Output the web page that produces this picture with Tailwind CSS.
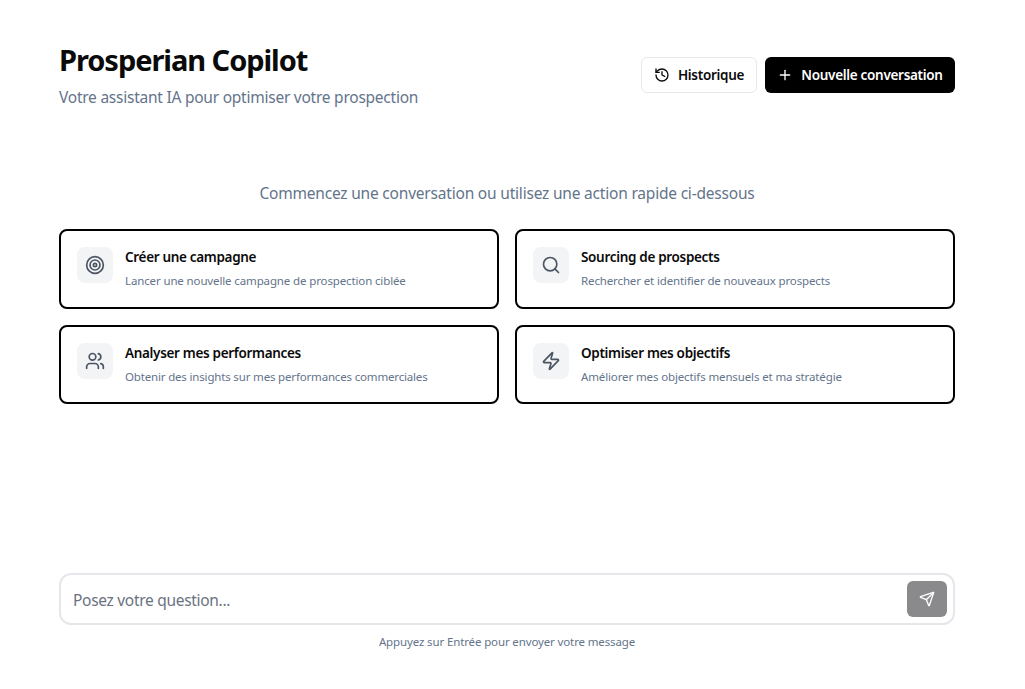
<!DOCTYPE html>
<html lang="fr">
  <head>
    <meta charset="UTF-8" />
    <meta name="viewport" content="width=device-width, initial-scale=1" />
    <title>Prosperian Copilot</title>
    <script src="https://cdn.jsdelivr.net/npm/@tailwindcss/browser@4"></script>
  </head>
  <body class="bg-white h-[689px] overflow-hidden font-['Noto_Sans',sans-serif] text-[#0a0a0a]">
    <div class="h-full w-[896px] ml-[59px] flex flex-col">
      <header class="flex items-center justify-between pt-[41px]">
        <div>
          <h1 class="text-[29px] leading-[38px] font-bold tracking-[-1.05px]">Prosperian Copilot</h1>
          <p class="mt-[6px] text-[15.5px] leading-[24px] text-[#64748b] tracking-[-0.24px]">Votre assistant IA pour optimiser votre prospection</p>
        </div>
        <div class="flex items-center gap-2">
          <button class="h-9 w-[116px] justify-center flex items-center gap-2 rounded-md border border-[#e5e7eb] bg-white text-[13.5px] font-semibold tracking-[-0.3px]">
            <svg class="w-4 h-4" viewBox="0 0 24 24" fill="none" stroke="currentColor" stroke-width="2" stroke-linecap="round" stroke-linejoin="round"><path d="M3 12a9 9 0 1 0 9-9 9.75 9.75 0 0 0-6.74 2.74L3 8"/><path d="M3 3v5h5"/><path d="M12 7v5l4 2"/></svg>
            Historique
          </button>
          <button class="h-9 w-[190px] justify-center flex items-center gap-2 rounded-md bg-black text-white text-[13.5px] font-semibold tracking-[-0.3px]">
            <svg class="w-4 h-4" viewBox="0 0 24 24" fill="none" stroke="currentColor" stroke-width="2" stroke-linecap="round" stroke-linejoin="round"><path d="M5 12h14"/><path d="M12 5v14"/></svg>
            Nouvelle conversation
          </button>
        </div>
      </header>

      <p class="mt-[72px] text-center text-[15.5px] leading-[24px] text-[#64748b] tracking-[-0.2px]">Commencez une conversation ou utilisez une action rapide ci-dessous</p>

      <div class="mt-[24px] grid grid-cols-2 gap-x-4 gap-y-4">
        <div class="h-[80px] rounded-lg border-2 border-black p-4 flex items-start gap-3">
          <div class="w-9 h-9 rounded-lg bg-[#f3f4f6] flex items-center justify-center text-[#4b5563]">
            <svg class="w-5 h-5" viewBox="0 0 24 24" fill="none" stroke="currentColor" stroke-width="2" stroke-linecap="round" stroke-linejoin="round"><circle cx="12" cy="12" r="10"/><circle cx="12" cy="12" r="6"/><circle cx="12" cy="12" r="2"/></svg>
          </div>
          <div>
            <h3 class="text-[13.5px] leading-5 font-semibold tracking-[-0.32px]">Créer une campagne</h3>
            <p class="mt-[6px] text-[11.5px] leading-4 text-[#64748b] tracking-[-0.13px]">Lancer une nouvelle campagne de prospection ciblée</p>
          </div>
        </div>
        <div class="h-[80px] rounded-lg border-2 border-black p-4 flex items-start gap-3">
          <div class="w-9 h-9 rounded-lg bg-[#f3f4f6] flex items-center justify-center text-[#4b5563]">
            <svg class="w-5 h-5" viewBox="0 0 24 24" fill="none" stroke="currentColor" stroke-width="2" stroke-linecap="round" stroke-linejoin="round"><circle cx="11" cy="11" r="8"/><path d="m21 21-4.3-4.3"/></svg>
          </div>
          <div>
            <h3 class="text-[13.5px] leading-5 font-semibold tracking-[-0.32px]">Sourcing de prospects</h3>
            <p class="mt-[6px] text-[11.5px] leading-4 text-[#64748b] tracking-[-0.13px]">Rechercher et identifier de nouveaux prospects</p>
          </div>
        </div>
        <div class="h-[79px] rounded-lg border-2 border-black p-4 flex items-start gap-3">
          <div class="w-9 h-9 rounded-lg bg-[#f3f4f6] flex items-center justify-center text-[#4b5563]">
            <svg class="w-5 h-5" viewBox="0 0 24 24" fill="none" stroke="currentColor" stroke-width="2" stroke-linecap="round" stroke-linejoin="round"><path d="M16 21v-2a4 4 0 0 0-4-4H6a4 4 0 0 0-4 4v2"/><circle cx="9" cy="7" r="4"/><path d="M22 21v-2a4 4 0 0 0-3-3.87"/><path d="M16 3.13a4 4 0 0 1 0 7.75"/></svg>
          </div>
          <div>
            <h3 class="text-[13.5px] leading-5 font-semibold tracking-[-0.32px]">Analyser mes performances</h3>
            <p class="mt-[6px] text-[11.5px] leading-4 text-[#64748b] tracking-[-0.17px]">Obtenir des insights sur mes performances commerciales</p>
          </div>
        </div>
        <div class="h-[79px] rounded-lg border-2 border-black p-4 flex items-start gap-3">
          <div class="w-9 h-9 rounded-lg bg-[#f3f4f6] flex items-center justify-center text-[#4b5563]">
            <svg class="w-5 h-5" viewBox="0 0 24 24" fill="none" stroke="currentColor" stroke-width="2" stroke-linecap="round" stroke-linejoin="round"><path d="M4 14a1 1 0 0 1-.78-1.63l9.9-10.2a.5.5 0 0 1 .86.46l-1.92 6.02A1 1 0 0 0 13 10h7a1 1 0 0 1 .78 1.63l-9.9 10.2a.5.5 0 0 1-.86-.46l1.92-6.02A1 1 0 0 0 11 14z"/></svg>
          </div>
          <div>
            <h3 class="text-[13.5px] leading-5 font-semibold tracking-[-0.32px]">Optimiser mes objectifs</h3>
            <p class="mt-[6px] text-[11.5px] leading-4 text-[#64748b] tracking-[-0.13px]">Améliorer mes objectifs mensuels et ma stratégie</p>
          </div>
        </div>
      </div>

      <div class="mt-auto mb-[39px]">
        <div class="h-[52px] rounded-xl border-2 border-[#e5e7eb] flex items-center pl-3 pr-[6px]">
          <span class="flex-1 mt-[4px] text-[15.5px] text-[#6b7280] tracking-[-0.3px]">Posez votre question...</span>
          <button class="w-10 h-9 rounded-md bg-[#8a8a8c] flex items-center justify-center text-white">
            <svg class="w-4 h-4" viewBox="0 0 24 24" fill="none" stroke="currentColor" stroke-width="2" stroke-linecap="round" stroke-linejoin="round"><path d="M14.536 21.686a.5.5 0 0 0 .937-.024l6.5-19a.496.496 0 0 0-.635-.635l-19 6.5a.5.5 0 0 0-.024.937l7.93 3.18a2 2 0 0 1 1.112 1.11z"/><path d="m21.854 2.147-10.94 10.939"/></svg>
          </button>
        </div>
        <p class="mt-[9px] text-center text-[11.5px] leading-4 text-[#64748b] tracking-[-0.13px]">Appuyez sur Entrée pour envoyer votre message</p>
      </div>
    </div>
  </body>
</html>
